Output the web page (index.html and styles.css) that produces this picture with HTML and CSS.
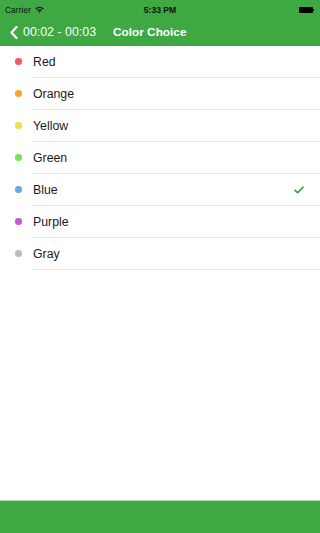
FILE: index.html
```html
<!DOCTYPE html>
<html>
<head>
<meta charset="utf-8">
<link rel="stylesheet" href="styles.css">
</head>
<body>
<div class="screen">
  <header class="header">
    <div class="status">
      <div class="status-left">
        <span class="carrier">Carrier</span>
        <svg class="wifi" width="9" height="7" viewBox="0 0 9 7">
          <path d="M0.3 2.4 A6 6 0 0 1 8.7 2.4 L7.7 3.4 A4.6 4.6 0 0 0 1.3 3.4 Z" fill="#111"/>
          <path d="M2.1 4.2 A3.6 3.6 0 0 1 6.9 4.2 L5.9 5.2 A2.2 2.2 0 0 0 3.1 5.2 Z" fill="#111"/>
          <path d="M3.6 5.9 L4.5 5 L5.4 5.9 L4.5 6.8 Z" fill="#111"/>
        </svg>
      </div>
      <span class="time">5:33 PM</span>
      <div class="battery"><div class="battery-body"></div><div class="battery-tip"></div></div>
    </div>
    <div class="nav">
      <div class="back">
        <svg class="chevron" width="8" height="13" viewBox="0 0 8 13">
          <path d="M6.5 1 L1.5 6.5 L6.5 12" fill="none" stroke="#fff" stroke-width="2.2" stroke-linecap="round" stroke-linejoin="round"/>
        </svg>
        <span class="back-label">00:02 - 00:03</span>
      </div>
      <span class="title">Color Choice</span>
    </div>
  </header>
  <ul class="list">
    <li class="row"><span class="dot red"></span><div class="cell"><span class="label">Red</span></div></li>
    <li class="row"><span class="dot orange"></span><div class="cell"><span class="label">Orange</span></div></li>
    <li class="row"><span class="dot yellow"></span><div class="cell"><span class="label">Yellow</span></div></li>
    <li class="row"><span class="dot green"></span><div class="cell"><span class="label">Green</span></div></li>
    <li class="row"><span class="dot blue"></span><div class="cell"><span class="label">Blue</span>
      <svg class="check" width="10" height="8" viewBox="0 0 10 8"><path d="M1 4.2 L3.6 6.8 L9 1.2" fill="none" stroke="#2f9a38" stroke-width="1.6" stroke-linecap="round" stroke-linejoin="round"/></svg>
    </div></li>
    <li class="row"><span class="dot purple"></span><div class="cell"><span class="label">Purple</span></div></li>
    <li class="row"><span class="dot gray"></span><div class="cell"><span class="label">Gray</span></div></li>
  </ul>
  <footer class="toolbar"></footer>
</div>
</body>
</html>
```
FILE: styles.css
```css
* { box-sizing: border-box; }
html, body { margin: 0; padding: 0; }
body {
  width: 100%;
  min-width: 300px;
  height: 533px;
  overflow: hidden;
  font-family: "Liberation Sans", Arial, sans-serif;
  background: #fff;
}
.screen {
  display: flex;
  flex-direction: column;
  height: 533px;
  width: 100%;
}
.header {
  background: #3ea843;
  height: 46px;
  flex: none;
}
.status {
  height: 20px;
  display: flex;
  align-items: center;
  justify-content: space-between;
  padding: 0 5px;
  position: relative;
}
.status-left {
  display: flex;
  align-items: center;
  gap: 4px;
  font-size: 8.3px;
  color: #111;
}
.carrier { letter-spacing: 0.1px; }
.wifi { margin-top: -1px; }
.time {
  position: absolute;
  left: 0;
  right: 0;
  text-align: center;
  font-size: 8.6px;
  font-weight: bold;
  color: #111;
}
.battery {
  display: flex;
  align-items: center;
  margin-right: 1px;
}
.battery-body {
  width: 14px;
  height: 6px;
  background: #000;
  border-radius: 1px;
}
.battery-tip {
  width: 1.5px;
  height: 2.5px;
  background: #000;
}
.nav {
  height: 26px;
  display: flex;
  align-items: center;
  padding-left: 10px;
  color: #fff;
  padding-bottom: 3px;
}
.back {
  display: flex;
  align-items: center;
  gap: 5px;
}
.chevron { margin-top: 1px; }
.back-label {
  font-size: 12.4px;
}
.title {
  margin-left: 17px;
  font-size: 11.8px;
  font-weight: bold;
}
.list {
  list-style: none;
  margin: 0;
  padding: 0;
  flex: 1;
}
.row {
  height: 32px;
  display: flex;
  align-items: stretch;
}
.dot {
  width: 6.5px;
  height: 6.5px;
  border-radius: 50%;
  align-self: center;
  margin-left: 15px;
  margin-right: 11.5px;
  margin-bottom: 1px;
}
.red { background: #f05d5a; }
.orange { background: #f5a43a; }
.yellow { background: #f5dc48; }
.green { background: #7de05a; }
.blue { background: #6fa3ec; }
.purple { background: #c659d9; }
.gray { background: #bcbcbc; }
.cell {
  flex: 1;
  display: flex;
  align-items: center;
  justify-content: space-between;
  border-bottom: 1px solid #e3e3e5;
  padding-right: 16px;
}
.label {
  font-size: 12.3px;
  color: #1a1a1a;
}
.check { margin-top: 1px; }
.toolbar {
  height: 33px;
  flex: none;
  background: #3ea843;
  border-top: 1px solid #b7dbb8;
}
```
